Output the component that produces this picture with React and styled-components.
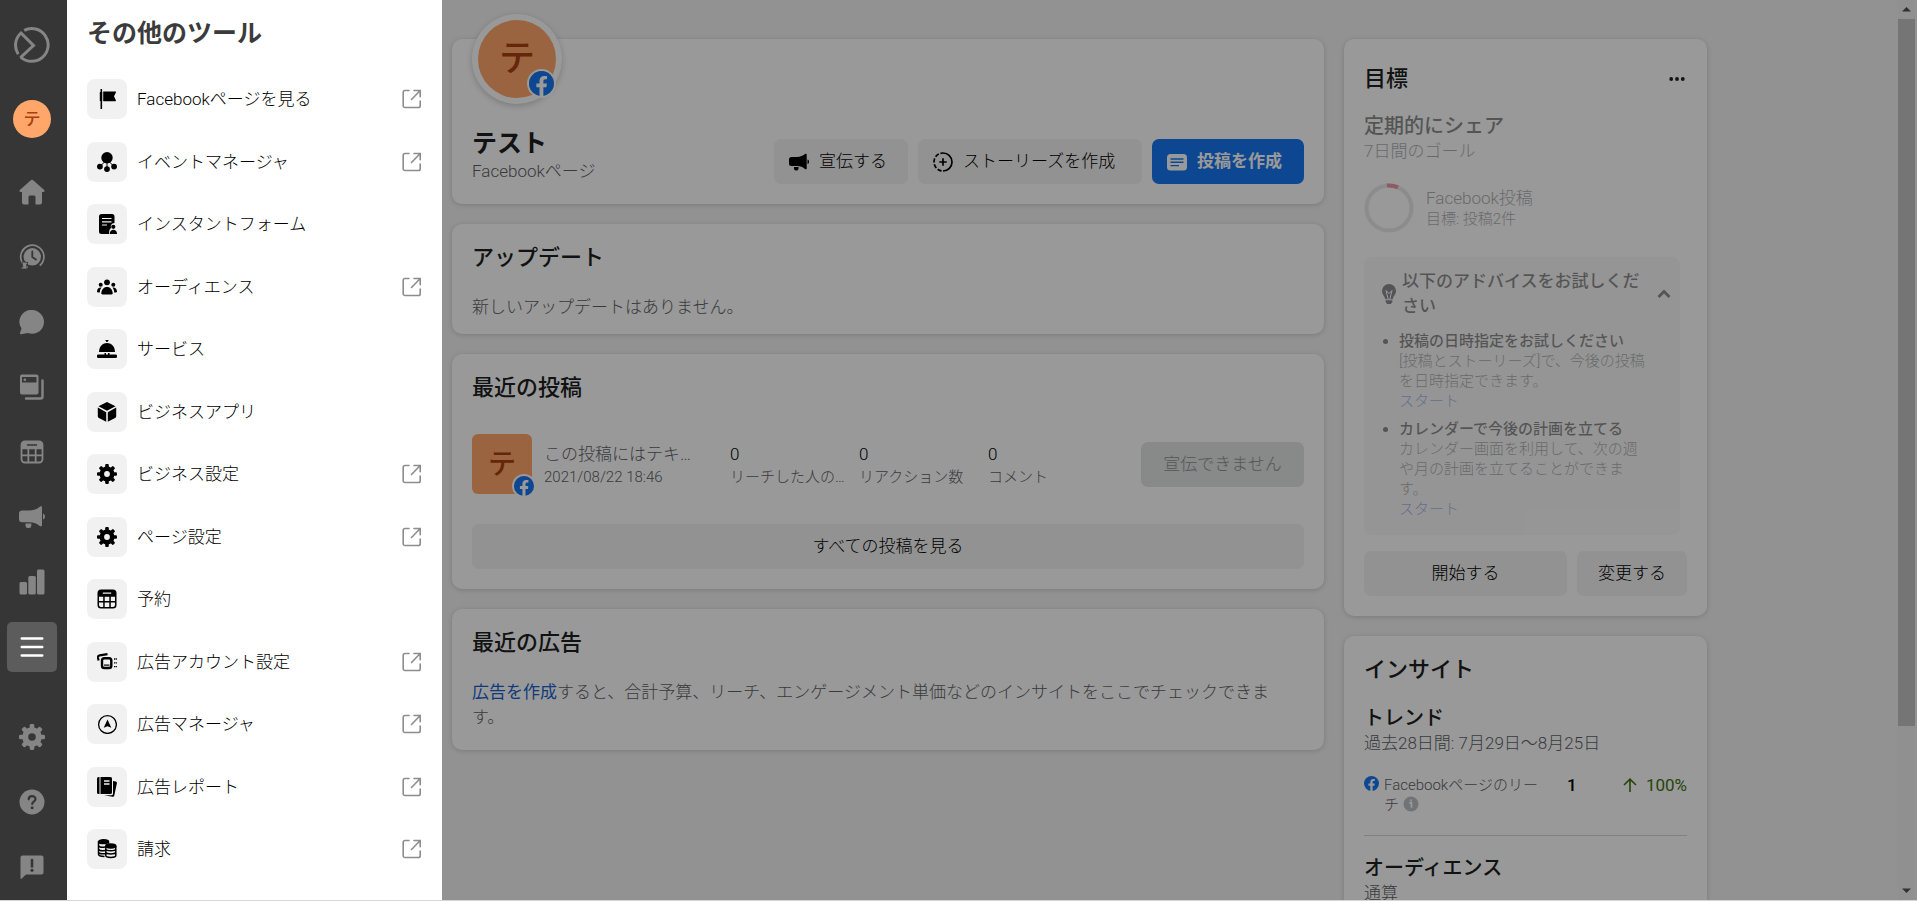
import React from "react";
import styled, { createGlobalStyle, css } from "styled-components";

const GlobalStyle = createGlobalStyle`
  *, *::before, *::after { box-sizing: border-box; }
  html, body { margin: 0; padding: 0; }
  body, button {
    font-family: Roboto, "Noto Sans CJK JP", sans-serif;
    font-size: 17px;
    line-height: 25px;
    font-weight: 300;
    color: #1c1e21;
  }
  h1, h2, h3, p, ul { margin: 0; padding: 0; }
  ul { list-style: none; }
  a { color: inherit; text-decoration: none; }
  button { margin: 0; border: 0; padding: 0; background: none; cursor: pointer; }
  svg { display: block; flex: none; }
`;

/* ---------- icons ---------- */

const Svg = ({ size = 20, box = 20, children, ...rest }) => (
  <svg width={size} height={size} viewBox={`0 0 ${box} ${box}`} fill="currentColor" aria-hidden="true" {...rest}>
    {children}
  </svg>
);

const LogoIcon = () => (
  <Svg size={36} box={36} fill="none" stroke="currentColor" strokeWidth="3">
    <path d="M10.2 3.4A16.4 16.4 0 1 1 6.6 30" />
    <path d="M4.2 27.2A16.4 16.4 0 0 1 7 6L19.5 18.5 6.4 30.6" strokeLinejoin="miter" />
  </Svg>
);
const HomeIcon = () => (
  <Svg size={26} box={26}>
    <path d="M11.8 1.2a1.8 1.8 0 0 1 2.4 0l11 9.8c.8.8.3 2-.8 2H23v10.500a2 2 0 0 1-2 2h-4.500V18a1.500 1.500 0 0 0-1.500-1.500h-4A1.500 1.500 0 0 0 9.500 18v7.500H5a2 2 0 0 1-2-2V13H1.600C.5 13 0 11.800.8 11z" />
  </Svg>
);
const ClockIcon = () => (
  <Svg size={26} box={26}>
    <circle cx="13.300" cy="12.800" r="11.600" fill="none" stroke="currentColor" strokeWidth="1.700" strokeDasharray="60 13" transform="rotate(112 13.300 12.800)" />
    <circle cx="13.300" cy="12.800" r="8.700" />
    <path d="M13.300 7.500v5.500l3.600 2.600" fill="none" stroke="#363636" strokeWidth="1.800" strokeLinecap="round" />
    <path d="M3 17.800l6 .8-1.400 2 .6 4.400H1.500l2.300-2.400z" stroke="#363636" strokeWidth=".8" />
  </Svg>
);
const ChatIcon = () => (
  <Svg size={26} box={26}>
    <path d="M13.300 1A11.900 11.900 0 1 1 8.800 24L2 25.300c-.9.100-1.300-.6-1-1.300l1.500-4.500A11.900 11.900 0 0 1 13.300 1z" />
  </Svg>
);
const PostsIcon = () => (
  <Svg size={26} box={26}>
    <path fillRule="evenodd" d="M3 .5h14.500a2 2 0 0 1 2 2v16a2 2 0 0 1-2 2H3a2 2 0 0 1-2-2v-16a2 2 0 0 1 2-2zM3 3v5.500h14.500V3z" />
    <circle cx="5.800" cy="5.700" r="1.300" />
    <path d="M23.500 6.500v16a2 2 0 0 1-2 2H7" fill="none" stroke="currentColor" strokeWidth="2.400" strokeLinecap="round" />
  </Svg>
);
const CalendarIcon = ({ size = 20 }) => (
  <Svg size={size}>
    <path
      fillRule="evenodd"
      d="M4 .5h12A3.500 3.500 0 0 1 19.500 4v12a3.500 3.500 0 0 1-3.500 3.500H4A3.500 3.500 0 0 1 .5 16V4A3.500 3.500 0 0 1 4 .5zM5.800 3.500v1.200h8.400V3.500zM2 7.800V12h4.200V7.800zm5.700 0V12h4.600V7.800zm6.100 0V12H18V7.800zM2 13.500V16a2 2 0 0 0 2 2h2.200v-4.500zm5.700 0V18h4.600v-4.500zm6.100 0V18H16a2 2 0 0 0 2-2v-2.500z"
    />
  </Svg>
);
const MegaphoneIcon = ({ size = 20 }) => (
  <Svg size={size}>
    <path d="M0 7.500A2.500 2.500 0 0 1 2.500 5H8c3.500 0 6-1.300 8-2.900.8-.6 1.700-.2 1.700.7v13.400c0 1-.9 1.400-1.700.8-2-1.600-4.500-2.900-8-2.900H2.500A2.500 2.500 0 0 1 0 11.600z" />
    <path d="M5 15h4.500v1.700a1.800 1.800 0 0 1-1.800 1.800h-.9A1.800 1.800 0 0 1 5 16.700z" />
    <path d="M18.500 7.500c2 .4 2 4 0 4.400z" />
  </Svg>
);
const BarsIcon = () => (
  <Svg size={26} box={26}>
    <rect x=".5" y="13" width="7.500" height="12.500" rx="1.500" />
    <rect x="9.300" y="7" width="7.500" height="18.500" rx="1.500" />
    <rect x="18" y=".5" width="7.500" height="25" rx="1.500" />
  </Svg>
);
const MenuIcon = () => (
  <Svg size={24} box={24} fill="none" stroke="currentColor" strokeWidth="2.600" strokeLinecap="round">
    <path d="M1.800 3.500h20.400M1.800 12h20.400M1.800 20.500h20.400" />
  </Svg>
);
const GearIcon = ({ size = 20 }) => (
  <Svg size={size}>
    <circle cx="10" cy="10" r="5.200" fill="none" stroke="currentColor" strokeWidth="4.600" />
    {[0, 45, 90, 135, 180, 225, 270, 315].map((a) => (
      <rect key={a} x="8.200" y="0" width="3.600" height="4" rx="1.100" transform={`rotate(${a} 10 10)`} />
    ))}
  </Svg>
);
const HelpIcon = () => (
  <Svg size={26} box={26}>
    <circle cx="13" cy="13" r="12.500" />
    <path d="M9.700 10.300c0-4.300 6.800-4.200 6.800-.3 0 2.500-3.300 2.600-3.300 5" fill="none" stroke="#363636" strokeWidth="2.200" strokeLinecap="round" />
    <circle cx="13.100" cy="18.800" r="1.500" fill="#363636" />
  </Svg>
);
const FeedbackIcon = () => (
  <Svg size={26} box={26}>
    <path d="M3.500 1.500h19a2 2 0 0 1 2 2v15a2 2 0 0 1-2 2H7l-4.500 4.300c-.5.400-1 .2-1-.5V3.500a2 2 0 0 1 2-2z" />
    <path d="M13 6v6.500" stroke="#363636" strokeWidth="2.600" strokeLinecap="round" />
    <circle cx="13" cy="16.300" r="1.600" fill="#363636" />
  </Svg>
);
const FlagIcon = () => (
  <Svg>
    <path d="M4.300.5v19" stroke="currentColor" strokeWidth="1.600" strokeLinecap="round" />
    <path d="M2.800 3h2.400v9H2.800zM6.200 2.500H18.500c.5 0 .7.500.4.900L17 7.300l1.900 4c.2.400 0 .9-.5.900H6.200z" />
  </Svg>
);
const EventIcon = () => (
  <Svg>
    <circle cx="10" cy="5.700" r="5.700" />
    <path d="M10 10v6M8 9.500l-3.500 3.500M12 9.500l3.500 3.500" stroke="currentColor" strokeWidth="1" />
    <circle cx="2.900" cy="14.600" r="2.900" />
    <circle cx="10" cy="17.100" r="2.900" />
    <circle cx="17.100" cy="14.600" r="2.900" />
  </Svg>
);
const FormIcon = () => (
  <Svg>
    <path d="M4.500 0H15a2.500 2.500 0 0 1 2.500 2.500V9c-3 .2-4.300 2.500-3.300 5-1.700.9-2.200 2.700-2 6H4.500A2.500 2.500 0 0 1 2 17.500v-15A2.500 2.500 0 0 1 4.500 0z" />
    <path d="M5 4.500h9.500M5 7.800h9.500M5 11h5" stroke="#f1f1f1" strokeWidth="1.200" />
    <circle cx="16.300" cy="12.800" r="2.100" />
    <path d="M12.800 20c-.2-5.600 7.400-5.600 7.200 0z" />
  </Svg>
);
const PeopleIcon = () => (
  <Svg>
    <circle cx="10" cy="5.300" r="2.900" />
    <circle cx="3.700" cy="7.700" r="2" />
    <circle cx="16.300" cy="7.700" r="2" />
    <path d="M5.600 17.500c-1 0-1.500-.7-1.300-1.700C5.300 8 14.700 8 15.700 15.800c.2 1-.3 1.700-1.300 1.700z" />
    <path d="M1 15.500c-.7 0-1-.5-1-1.200.2-2.800 2-4.200 4.600-3.800-1.200 1.400-1.700 3-1.800 5zM19 15.500c.7 0 1-.5 1-1.200-.2-2.800-2-4.200-4.600-3.800 1.200 1.400 1.700 3 1.800 5z" />
  </Svg>
);
const BellIcon = () => (
  <Svg>
    <path d="M8.200 1h3.600L10.500 3h-1z" />
    <path d="M2 13C2.200 1 17.800 1 18 13z" />
    <path d="M7.500 14h1.500v2H7.500zM11 14h1.500v2H11zM0 16.800a1.300 1.300 0 0 1 1.300-1.300h17.400a1.300 1.300 0 0 1 1.300 1.300v.9a1.300 1.300 0 0 1-1.300 1.300H1.300A1.300 1.300 0 0 1 0 17.700z" />
  </Svg>
);
const CubeIcon = () => (
  <Svg>
    <path d="M9 .4a2 2 0 0 1 2 0l7.500 3.800L10 8.800 1.500 4.200zM.8 5.600l8.400 4.700v9.500l-7.300-3.700a2 2 0 0 1-1.100-1.800zM19.200 5.600l-8.400 4.700v9.500l7.300-3.700a2 2 0 0 0 1.100-1.800z" />
  </Svg>
);
const AdAccountIcon = () => (
  <Svg>
    <path d="M1.600 8.500L1 6C.7 4.500 1.300 3.600 2.700 3.300L10.500 2.200" fill="none" stroke="currentColor" strokeWidth="2.200" />
    <rect x="5" y="6.200" width="9.300" height="9.800" rx="2.300" fill="none" stroke="currentColor" strokeWidth="2.400" />
    <rect x="7" y="12.500" width="5.500" height="1.200" />
    <path d="M17 7h3M17 10.800h3M17 14.600h3" stroke="currentColor" strokeWidth="1.300" strokeDasharray="1.200 .5" />
  </Svg>
);
const AdManagerIcon = () => (
  <Svg>
    <circle cx="10.500" cy="10.500" r="8.900" fill="none" stroke="currentColor" strokeWidth="1.300" />
    <path d="M10.500 5.500l3.800 8.300-3.800-1.500-3.800 1.500z" />
  </Svg>
);
const ReportIcon = () => (
  <Svg>
    <path d="M1.500 0h1v17h-1A1.500 1.500 0 0 1 0 15.500v-14A1.500 1.500 0 0 1 1.500 0zM3.500 0h10A1.500 1.500 0 0 1 15 1.500v14a1.500 1.500 0 0 1-1.500 1.500h-10z" />
    <path d="M7 4h5.500M7 7h5.500" stroke="#f1f1f1" strokeWidth="1.300" />
    <path d="M16 4l2.800.6c.9.200 1.300.9 1.100 1.700l-2.600 12.200c-.2.900-.9 1.400-1.700 1.200L7 18.200h7.500c1 0 1.500-.7 1.500-1.700z" />
  </Svg>
);
const CoinsIcon = () => (
  <Svg fill="none" stroke="currentColor" strokeWidth="1.500">
    <ellipse cx="6.500" cy="2.700" rx="5" ry="1.900" fill="currentColor" />
    <path d="M1.500 2.700v12.500c0 1.300 2.500 2.200 6 2.200M11.500 2.700v2M1.500 6.500c.6 1.500 4 2 6.500 1.600M1.500 10c.6 1.500 4 2 6.500 1.600M1.500 13.300c.6 1.200 4 1.700 6.500 1.400" />
    <ellipse cx="13.800" cy="7" rx="5" ry="1.900" fill="currentColor" />
    <path d="M8.800 7v9.600c0 2.500 10 2.500 10 0V7M8.800 10.300c.8 2 9.200 2 10 0M8.800 13.400c.8 2 9.200 2 10 0" />
  </Svg>
);
const ExternalIcon = () => (
  <Svg fill="none" stroke="currentColor" strokeWidth="1.600" strokeLinecap="round">
    <path d="M7 1.500H3A1.800 1.800 0 0 0 1.200 3.300v13.400A1.800 1.800 0 0 0 3 18.500h13.400a1.800 1.800 0 0 0 1.800-1.800V12M12 1.500h6.200v6.200M18 1.700L9.500 10.500" />
  </Svg>
);
const StoryIcon = () => (
  <Svg fill="none" stroke="currentColor" strokeWidth="1.700">
    <path d="M10 1a9 9 0 0 1 0 18" />
    <path d="M10 19A9 9 0 0 1 10 1" strokeDasharray="4.200 1.800" strokeDashoffset="-1.500" />
    <path d="M10 6.300v7.400M6.300 10h7.400" />
  </Svg>
);
const PostIcon = () => (
  <Svg>
    <rect x="0" y="2" width="20" height="16.500" rx="3.500" />
    <path d="M3.500 7h13M3.500 10.300h13M3.500 13.600h8.500" stroke="#1877f2" strokeWidth="1.400" />
  </Svg>
);
const BulbIcon = () => (
  <Svg size={20}>
    <path d="M10 0a7 7 0 0 0-7 7c0 3.500 2.800 5 3.300 8.300h7.400C14.200 12 17 10.500 17 7a7 7 0 0 0-7-7zM6.600 16.300h6.800V18l-1.700 2H8.300l-1.700-2z" />
    <path d="M7 6.500l2.200 8.800M13 6.500l-2.200 8.800M7 6.500l3 3 3-3" stroke="#fff" strokeWidth="1" fill="none" />
  </Svg>
);
const ChevronUpIcon = () => (
  <Svg size={16} box={16} fill="none" stroke="currentColor" strokeWidth="2.800">
    <path d="M2.500 11L8 5.500l5.500 5.500" />
  </Svg>
);
const DotsIcon = () => (
  <Svg size={16} box={16}>
    <circle cx="2.200" cy="8" r="1.900" />
    <circle cx="8" cy="8" r="1.900" />
    <circle cx="13.800" cy="8" r="1.900" />
  </Svg>
);
const FacebookIcon = ({ size }) => (
  <Svg size={size} box={24}>
    <circle cx="12" cy="12" r="12" fill="#1877f2" />
    <path fill="#fff" d="M10.100 24v-8.400H7.100v-3.600h3V9.400c0-3 1.800-4.700 4.500-4.700 1.300 0 2.700.2 2.700.2v3h-1.500c-1.500 0-2 .9-2 1.900V12h3.400l-.5 3.600h-2.900V24a12 12 0 0 1-3.700 0z" />
  </Svg>
);
const InfoIcon = () => (
  <Svg size={16} box={16}>
    <circle cx="8" cy="8" r="7.500" fill="#bcc0c4" />
    <path d="M6.300 6.800H8.500v5M8 3.600v1.800" stroke="#fff" strokeWidth="1.700" fill="none" />
  </Svg>
);
const ArrowUpIcon = () => (
  <Svg size={14} box={14} fill="none" stroke="currentColor" strokeWidth="1.600">
    <path d="M7 14V1.500M1 7l6-5.800L13 7" />
  </Svg>
);
const RingChart = () => (
  <Svg size={50} box={50} fill="none" strokeWidth="4">
    <circle cx="25" cy="25" r="22.500" stroke="#d4d6da" />
    <path d="M23 2.600a22.500 22.500 0 0 1 11 1.800" stroke="#e0324b" />
  </Svg>
);

/* ---------- shell ---------- */

const Shell = styled.div`
  display: flex;
  height: 100vh;
  overflow: hidden;
  border-bottom: 1px solid #d6d4d4;
`;

const Rail = styled.nav`
  flex: none;
  width: 67px;
  padding: 20px 10px 8px 7px;
  display: flex;
  flex-direction: column;
  background: #363636;
  color: #8a8a8a;
`;
const RailGroup = styled.div`
  display: flex;
  flex-direction: column;
  gap: 15px;
  margin-top: ${(p) => (p.$end ? "auto" : "23px")};
`;
const RailButton = styled.button`
  width: 50px;
  height: 50px;
  display: flex;
  align-items: center;
  justify-content: center;
  border-radius: 5px;
  color: ${(p) => (p.$active ? "#fff" : "#858585")};
  background: ${(p) => (p.$active ? "#5c5c5c" : "transparent")};
`;
const RailAccount = styled(RailButton)`
  margin-top: 24px;
`;

const Avatar = styled.span`
  position: relative;
  flex: none;
  display: flex;
  align-items: center;
  justify-content: center;
  width: ${(p) => p.$size}px;
  height: ${(p) => p.$size}px;
  border-radius: ${(p) => (p.$square ? "6px" : "50%")};
  background: #ffa76a;
  color: #a8400f;
  font-size: ${(p) => p.$font}px;
  font-weight: 500;
`;
const AvatarFrame = styled.div`
  width: 90px;
  height: 90px;
  padding: 6px;
  margin-top: -25px;
  border-radius: 50%;
  background: #fff;
  box-shadow: 0 2px 6px rgba(0, 0, 0, 0.2);
`;
const Badge = styled.span`
  position: absolute;
  right: ${(p) => p.$offset}px;
  bottom: ${(p) => p.$offset}px;
  border: 2px solid #fff;
  border-radius: 50%;
`;

/* ---------- tools panel ---------- */

const ToolsPanel = styled.aside`
  flex: none;
  width: 375px;
  padding: 21px 20px 0;
  background: #fff;
  overflow: hidden;
`;
const ToolsTitle = styled.h1`
  margin-bottom: 32px;
  font-size: 25px;
  line-height: 26px;
  font-weight: 700;
  color: #3b3b3b;
`;
const ToolItem = styled.li`
  & + & { margin-top: 23px; }
  & + &:nth-child(odd) { margin-top: 22px; }
`;
const ToolLink = styled.a`
  display: flex;
  align-items: center;
  gap: 10px;
  color: #000;
`;
const ToolTile = styled.span`
  flex: none;
  width: 40px;
  height: 40px;
  display: flex;
  align-items: center;
  justify-content: center;
  border-radius: 8px;
  background: #f1f1f1;
  color: #000;
`;
const ToolExternal = styled.span`
  margin-left: auto;
  color: #8d8d8d;
`;

/* ---------- page ---------- */

const Page = styled.main`
  position: relative;
  flex: 1;
  min-width: 0;
  display: flex;
  background: #f3f3f3;
`;
const Backdrop = styled.div`
  position: absolute;
  inset: 0;
  background: rgba(0, 0, 0, 0.4);
`;
const Columns = styled.div`
  flex: 1;
  min-width: 0;
  display: grid;
  grid-template-columns: minmax(0, 872px) minmax(0, 363px);
  gap: 20px;
  align-items: start;
  padding: 39px 10px 0;
  overflow: hidden;
`;
const Column = styled.div`
  display: flex;
  flex-direction: column;
  gap: 20px;
`;
const Card = styled.section`
  padding: 20px 20px ${(p) => p.$bottom || 20}px;
  border-radius: 10px;
  background: #fff;
  box-shadow: 0 1px 5px rgba(0, 0, 0, 0.16);
`;
const CardTitle = styled.h2`
  font-size: 22px;
  line-height: 27px;
  font-weight: 500;
  color: #1c1e21;
  margin-bottom: ${(p) => p.$gap || 0}px;
`;
const SubTitle = styled.h3`
  font-size: 20px;
  line-height: 26px;
  font-weight: 500;
`;
const Body = styled.p`
  color: #606266;
`;
const AdsText = styled(Body)`
  padding-right: 20px;
`;
const Small = styled.p`
  font-size: 15px;
  line-height: 20px;
  color: #606266;
`;
const Link = styled.a`
  color: ${(p) => (p.$soft ? "#4a72d0" : "#1763cf")};
  font-weight: ${(p) => (p.$soft ? 300 : 400)};
`;

const Button = styled.button`
  display: flex;
  align-items: center;
  justify-content: ${(p) => (p.$icon ? "flex-start" : "center")};
  gap: 10px;
  height: 45px;
  padding: 0 15px;
  min-width: ${(p) => (p.$width ? `${p.$width}px` : "0")};
  flex: ${(p) => (p.$grow ? "1" : "none")};
  border-radius: 7px;
  white-space: nowrap;
  background: #f3f3f3;
  color: #000;
  ${(p) => p.$primary && css`
    background: #1877f2;
    color: #fff;
    font-weight: 700;
  `}
  &:disabled {
    background: #e3e4e5;
    color: #8f9194;
    cursor: default;
  }
`;

const ProfileCard = styled(Card)`
  padding-top: 0;
`;
const ProfileRow = styled.div`
  display: flex;
  align-items: flex-end;
  justify-content: space-between;
  margin-top: 25px;
`;
const ProfileName = styled.h2`
  font-size: 25px;
  line-height: 30px;
  font-weight: 700;
`;
const ButtonRow = styled.div`
  display: flex;
  gap: 10px;
`;

const PostRow = styled.div`
  display: flex;
  align-items: center;
  gap: 12px;
  margin-bottom: 30px;
`;
const PostText = styled.div`
  width: 155px;
`;
const Stats = styled.div`
  flex: 1;
  display: flex;
  gap: 10px;
  margin-left: 19px;
`;
const Stat = styled.div`
  width: 119px;
`;
const StatValue = styled.p`
  color: #000;
`;

const GoalHeader = styled.div`
  display: flex;
  align-items: center;
  justify-content: space-between;
  padding: 6px 2px 0 0;
  margin-bottom: 21px;
`;
const Faded = styled.div`
  opacity: 0.5;
`;
const GoalRow = styled.div`
  display: flex;
  align-items: center;
  gap: 12px;
  margin: 19px 0 24px;
`;
const GoalName = styled(Body)`
  line-height: 22px;
`;
const Advice = styled.div`
  margin-right: 7px;
  padding: 12px 7px 16px 15px;
  border-radius: 8px;
  background: #f5f5f5;
`;
const AdviceHeader = styled.div`
  display: grid;
  grid-template-columns: 20px minmax(0, 1fr) 16px;
  align-items: center;
  gap: 3px;
  margin-bottom: 12px;
  padding-right: 1px;
`;
const AdviceTitle = styled.h3`
  font-size: 17px;
  line-height: 25px;
  font-weight: 500;
`;
const AdviceList = styled.ul`
  list-style: disc;
  padding: 0 23px 0 20px;
`;
const AdviceItem = styled.li`
  font-size: 15px;
  line-height: 20px;
  & + & { margin-top: 8px; }
`;
const AdviceLead = styled.strong`
  display: block;
  font-weight: 500;
`;
const GoalActions = styled(ButtonRow)`
  margin-top: 16px;
`;

const Metric = styled.div`
  display: grid;
  grid-template-columns: 15px 160px 1fr auto;
  column-gap: 5px;
  align-items: start;
  padding: 19px 0 20px;
  border-bottom: 1px solid #d3d5d8;
  margin-bottom: 19px;
`;
const MetricIcon = styled.span`
  padding-top: 1px;
`;
const MetricLabel = styled(Small)`
  svg {
    display: inline-block;
    vertical-align: -2px;
  }
`;
const MetricValue = styled.strong`
  padding-left: 18px;
  font-weight: 500;
  line-height: 20px;
  color: #000;
`;
const MetricChange = styled.span`
  display: flex;
  align-items: center;
  gap: 9px;
  line-height: 20px;
  font-weight: 400;
  color: #3f7410;
`;

const ScrollBar = styled.div`
  flex: none;
  width: 17px;
  margin-right: 2px;
  display: flex;
  flex-direction: column;
  background: #f1f1f1;
`;
const ScrollThumb = styled.div`
  flex: 82 0 0;
  background: #c3c3c3;
`;
const ScrollRest = styled.div`
  flex: 18 0 0;
`;
const ScrollArrow = styled.span`
  height: 19px;
  display: flex;
  align-items: center;
  justify-content: center;
  color: #505050;
`;

const tools = [
  ["Facebookページを見る", FlagIcon, true],
  ["イベントマネージャ", EventIcon, true],
  ["インスタントフォーム", FormIcon, false],
  ["オーディエンス", PeopleIcon, true],
  ["サービス", BellIcon, false],
  ["ビジネスアプリ", CubeIcon, false],
  ["ビジネス設定", GearIcon, true],
  ["ページ設定", GearIcon, true],
  ["予約", CalendarIcon, false],
  ["広告アカウント設定", AdAccountIcon, true],
  ["広告マネージャ", AdManagerIcon, true],
  ["広告レポート", ReportIcon, true],
  ["請求", CoinsIcon, true],
];

const railMain = [
  ["ホーム", <HomeIcon />],
  ["アクティビティ", <ClockIcon />],
  ["受信箱", <ChatIcon />],
  ["投稿", <PostsIcon />],
  ["カレンダー", <CalendarIcon size={24} />],
  ["広告", <MegaphoneIcon size={26} />],
  ["インサイト", <BarsIcon />],
  ["その他のツール", <MenuIcon />, true],
];
const railEnd = [
  ["設定", <GearIcon size={26} />],
  ["ヘルプ", <HelpIcon />],
  ["フィードバック", <FeedbackIcon />],
];

const stats = [
  ["0", "リーチした人の…"],
  ["0", "リアクション数"],
  ["0", "コメント"],
];

const railButtons = (items) =>
  items.map(([label, icon, active]) => (
    <RailButton key={label} aria-label={label} $active={active}>
      {icon}
    </RailButton>
  ));

export default function App() {
  return (
    <Shell lang="ja">
      <GlobalStyle />
      <Rail>
        <RailButton aria-label="Business Suite">
          <LogoIcon />
        </RailButton>
        <RailAccount aria-label="アカウント">
          <Avatar $size={38} $font={17}>テ</Avatar>
        </RailAccount>
        <RailGroup>{railButtons(railMain)}</RailGroup>
        <RailGroup $end>{railButtons(railEnd)}</RailGroup>
      </Rail>

      <ToolsPanel>
        <ToolsTitle>その他のツール</ToolsTitle>
        <ul>
          {tools.map(([label, Icon, external]) => (
            <ToolItem key={label}>
              <ToolLink href="#">
                <ToolTile><Icon /></ToolTile>
                {label}
                {external && <ToolExternal><ExternalIcon /></ToolExternal>}
              </ToolLink>
            </ToolItem>
          ))}
        </ul>
      </ToolsPanel>

      <Page>
        <Columns>
          <Column>
            <ProfileCard>
              <AvatarFrame>
                <Avatar $size={78} $font={36}>
                  テ
                  <Badge $offset={0}><FacebookIcon size={25} /></Badge>
                </Avatar>
              </AvatarFrame>
              <ProfileRow>
                <div>
                  <ProfileName>テスト</ProfileName>
                  <Body>Facebookページ</Body>
                </div>
                <ButtonRow>
                  <Button $icon $width={134}><MegaphoneIcon />宣伝する</Button>
                  <Button $icon $width={224}><StoryIcon />ストーリーズを作成</Button>
                  <Button $icon $primary $width={152}><PostIcon />投稿を作成</Button>
                </ButtonRow>
              </ProfileRow>
            </ProfileCard>

            <Card $bottom={14}>
              <CardTitle $gap={24}>アップデート</CardTitle>
              <Body>新しいアップデートはありません。</Body>
            </Card>

            <Card>
              <CardTitle $gap={33}>最近の投稿</CardTitle>
              <PostRow>
                <Avatar $square $size={60} $font={28}>
                  テ
                  <Badge $offset={-4}><FacebookIcon size={20} /></Badge>
                </Avatar>
                <PostText>
                  <Body>この投稿にはテキ…</Body>
                  <Small>2021/08/22 18:46</Small>
                </PostText>
                <Stats>
                  {stats.map(([value, label]) => (
                    <Stat key={label}>
                      <StatValue>{value}</StatValue>
                      <Small>{label}</Small>
                    </Stat>
                  ))}
                </Stats>
                <Button disabled $width={163}>宣伝できません</Button>
              </PostRow>
              <ButtonRow>
                <Button $grow>すべての投稿を見る</Button>
              </ButtonRow>
            </Card>

            <Card>
              <CardTitle $gap={24}>最近の広告</CardTitle>
              <AdsText>
                <Link href="#">広告を作成</Link>
                すると、合計予算、リーチ、エンゲージメント単価などのインサイトをここでチェックできます。
              </AdsText>
            </Card>
          </Column>

          <Column>
            <Card>
              <GoalHeader>
                <CardTitle>目標</CardTitle>
                <button aria-label="その他"><DotsIcon /></button>
              </GoalHeader>
              <Faded>
                <SubTitle>定期的にシェア</SubTitle>
                <Body>7日間のゴール</Body>
                <GoalRow>
                  <RingChart />
                  <div>
                    <GoalName>Facebook投稿</GoalName>
                    <Small>目標: 投稿2件</Small>
                  </div>
                </GoalRow>
                <Advice>
                  <AdviceHeader>
                    <BulbIcon />
                    <AdviceTitle>以下のアドバイスをお試しください</AdviceTitle>
                    <button aria-label="閉じる"><ChevronUpIcon /></button>
                  </AdviceHeader>
                  <AdviceList>
                    <AdviceItem>
                      <AdviceLead>投稿の日時指定をお試しください</AdviceLead>
                      <Small>[投稿とストーリーズ]で、今後の投稿を日時指定できます。</Small>
                      <Link $soft href="#">スタート</Link>
                    </AdviceItem>
                    <AdviceItem>
                      <AdviceLead>カレンダーで今後の計画を立てる</AdviceLead>
                      <Small>カレンダー画面を利用して、次の週や月の計画を立てることができます。</Small>
                      <Link $soft href="#">スタート</Link>
                    </AdviceItem>
                  </AdviceList>
                </Advice>
              </Faded>
              <GoalActions>
                <Button $grow>開始する</Button>
                <Button $width={110}>変更する</Button>
              </GoalActions>
            </Card>

            <Card>
              <CardTitle $gap={22}>インサイト</CardTitle>
              <SubTitle>トレンド</SubTitle>
              <Body>過去28日間: 7月29日～8月25日</Body>
              <Metric>
                <MetricIcon><FacebookIcon size={15} /></MetricIcon>
                <MetricLabel>Facebookページのリーチ <InfoIcon /></MetricLabel>
                <MetricValue>1</MetricValue>
                <MetricChange><ArrowUpIcon />100%</MetricChange>
              </Metric>
              <SubTitle>オーディエンス</SubTitle>
              <Body>通算</Body>
            </Card>
          </Column>
        </Columns>
        <ScrollBar aria-hidden="true">
          <ScrollArrow><Svg size={9} box={9}><path d="M0 6.500L4.500 2 9 6.500z" /></Svg></ScrollArrow>
          <ScrollThumb />
          <ScrollRest />
          <ScrollArrow><Svg size={9} box={9}><path d="M0 2.500L4.500 7 9 2.500z" /></Svg></ScrollArrow>
        </ScrollBar>
        <Backdrop />
      </Page>
    </Shell>
  );
}
